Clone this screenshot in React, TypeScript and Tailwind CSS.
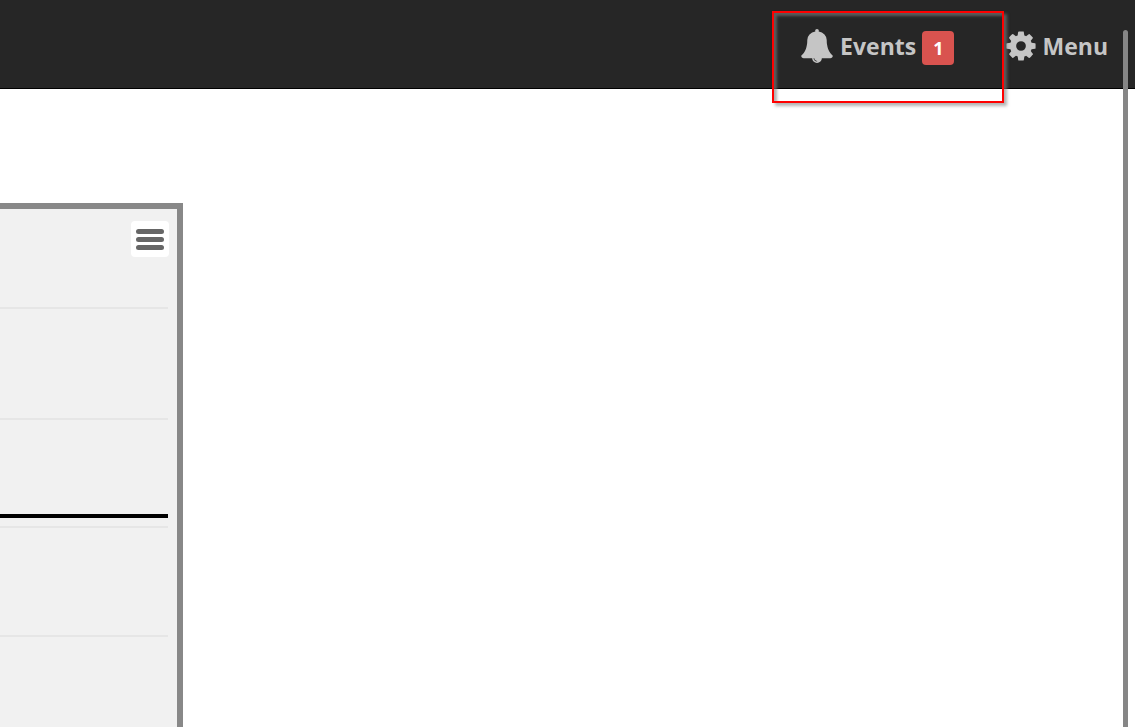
import React from 'react';

const GRID_LINES = [51, 162, 270, 379];

const BellIcon: React.FC = () => (
  <svg viewBox="0 0 1792 1792" className="w-[34px] h-[34px] shrink-0" fill="currentColor" aria-hidden="true">
    <path d="M912 1696q0-16-16-16-59 0-101.5-42.5t-42.5-101.5q0-16-16-16t-16 16q0 73 51.5 124.5t124.5 51.5q16 0 16-16zm816-288q0 52-38 90t-90 38h-448q0 106-75 181t-181 75-181-75-75-181h-448q-52 0-90-38t-38-90q50-42 91-88t85-119.5 74.5-158.5 50-206 19.5-260q0-152 117-282.5t307-158.5q-8-19-8-39 0-40 28-68t68-28 68 28 28 68q0 20-8 39 190 28 307 158.5t117 282.5q0 139 19.5 260t50 206 74.5 158.5 85 119.5 91 88z" />
  </svg>
);

const CogIcon: React.FC = () => (
  <svg viewBox="0 0 1792 1792" className="w-[34px] h-[34px] shrink-0" fill="currentColor" aria-hidden="true">
    <path d="M1152 896q0-106-75-181t-181-75-181 75-75 181 75 181 181 75 181-75 75-181zm512-109v222q0 12-8 23t-20 13l-185 28q-19 54-39 91 35 50 107 138 10 12 10 25t-9 23q-27 37-99 108t-94 71q-12 0-26-9l-138-108q-44 23-91 38-16 136-29 186-7 28-36 28h-222q-14 0-24.5-8.5t-11.5-21.5l-28-184q-49-16-90-37l-141 107q-10 9-25 9-14 0-25-11-126-114-165-168-7-10-7-23 0-12 8-23 15-21 51-66.5t54-70.5q-27-50-41-99l-183-27q-13-2-21-12.5t-8-23.5v-222q0-12 8-23t19-13l186-28q14-46 39-92-40-57-107-138-10-12-10-24 0-10 9-23 26-36 98.5-107.5t94.5-71.5q13 0 26 10l138 107q44-23 91-38 16-136 29-186 7-28 36-28h222q14 0 24.5 8.5t11.5 21.5l28 184q49 16 90 37l142-107q9-9 24-9 13 0 25 10 129 119 165 170 7 8 7 22 0 12-8 23-15 21-51 66.5t-54 70.5q26 50 41 98l183 28q13 2 21 12.5t8 23.5z" />
  </svg>
);

const App: React.FC = () => {
  return (
    <div className="relative flex flex-col min-h-screen bg-white overflow-hidden font-['Open_Sans','Noto_Sans',sans-serif]">
      <header className="bg-[#262626] border-b border-black">
        <nav className="flex justify-end pt-[29px] pb-[23px] pr-[27px] text-[23px] leading-[34px] font-bold text-[#c5c5c5]">
          <div className="relative pr-[50px]">
            <a href="#events" className="flex items-start gap-[6px]">
              <BellIcon />
              <span>Events</span>
              <span className="h-[34px] mt-[2px] px-[11px] rounded bg-[#d9534f] text-lg leading-[34px] text-white">1</span>
            </a>
            {/* highlight frame around the events link */}
            <div className="absolute -top-[18px] -bottom-[38px] -left-7 right-0 border-2 border-[#ff0000] pointer-events-none shadow-[3px_3px_3px_rgba(128,128,128,0.6),inset_3px_3px_3px_rgba(128,128,128,0.6)]" />
          </div>
          <a href="#menu" className="flex items-start gap-1">
            <CogIcon />
            <span>Menu</span>
          </a>
        </nav>
      </header>

      <main className="flex flex-1 pt-[114px]">
        <section className="flex flex-col w-[183px] pt-3 pr-2 border-t-6 border-r-6 border-[#888888] bg-[#f1f1f1]">
          <button type="button" aria-label="Chart menu" className="self-end flex flex-col justify-center items-center gap-[3px] w-[38px] h-9 rounded bg-white">
            <span className="w-7 h-[5px] rounded-full bg-[#666666]" />
            <span className="w-7 h-[5px] rounded-full bg-[#666666]" />
            <span className="w-7 h-[5px] rounded-full bg-[#666666]" />
          </button>
          <svg className="w-[168px] h-[470px]" aria-hidden="true">
            {GRID_LINES.map(y => (
              <line key={y} x1="0" x2="168" y1={y} y2={y} stroke="#e6e6e6" strokeWidth="2" />
            ))}
            <line x1="0" x2="168" y1="259" y2="259" stroke="#000000" strokeWidth="4" />
          </svg>
        </section>
      </main>

      {/* overlay scrollbar */}
      <div className="absolute top-[30px] bottom-0 right-[7px] w-[5px] rounded-t-full bg-[#868686]" />
    </div>
  );
};

export default App;
